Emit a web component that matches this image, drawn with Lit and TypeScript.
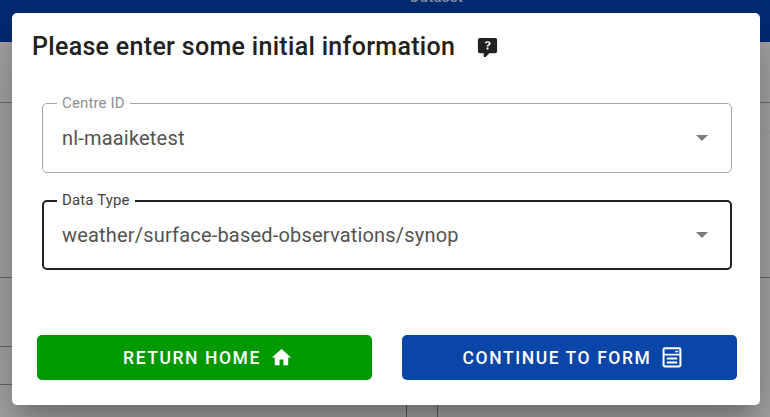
import { LitElement, html, css, svg } from "lit";
import { customElement, property } from "lit/decorators.js";

const icons = {
  help: "M4,2H20A2,2 0 0,1 22,4V16A2,2 0 0,1 20,18H13.9L10.2,21.71C10,21.9 9.75,22 9.5,22V22H9A1,1 0 0,1 8,21V18H4A2,2 0 0,1 2,16V4C2,2.89 2.9,2 4,2M12.19,5.5C11.3,5.5 10.59,5.68 10.05,6.04C9.5,6.4 9.22,7 9.27,7.69H11.24C11.24,7.41 11.34,7.2 11.5,7.06C11.7,6.92 11.92,6.85 12.19,6.85C12.5,6.85 12.77,6.93 12.95,7.11C13.13,7.28 13.22,7.5 13.22,7.8C13.22,8.08 13.14,8.33 13,8.54C12.83,8.76 12.62,8.94 12.36,9.08C11.84,9.4 11.5,9.68 11.29,9.92C11.1,10.16 11,10.5 11,11H13C13,10.72 13.05,10.5 13.14,10.32C13.23,10.15 13.4,10 13.66,9.85C14.12,9.64 14.5,9.36 14.79,9C15.08,8.63 15.23,8.24 15.23,7.8C15.23,7.1 14.96,6.54 14.42,6.12C13.88,5.71 13.13,5.5 12.19,5.5M11,12V14H13V12H11Z",
  home: "M10,20V14H14V20H19V12H22L12,3L2,12H5V20H10Z",
};

const glyph = (d: string) => html`<svg viewBox="0 0 24 24">${svg`<path fill="currentColor" d=${d}></path>`}</svg>`;

const formGlyph = html`<svg viewBox="0 0 24 24">
  <rect x="3.7" y="2.4" width="17.6" height="19" rx="1.2" fill="none" stroke="currentColor" stroke-width="2.1"></rect>
  <path fill="currentColor" d="M3.5 8H21.5V10H3.5ZM15.9 5H19.1V6.6H15.9ZM7.1 12H17.9V14.2H7.1ZM7.1 16.1H17.9V18.3H7.1Z"></path>
</svg>`;

@customElement("select-field")
export class SelectField extends LitElement {
  @property() label = "";
  @property() value = "";
  static styles = css`
    :host { display: block; --line: #a6a6a6; --w: 1px; --label: #8f8f8f; }
    :host([focused]) { --line: #212121; --w: 2px; --label: #424242; }
    fieldset {
      box-sizing: border-box; height: 78px; margin: 0; padding: 0 23px 0 14px;
      border: var(--w) solid var(--line); border-radius: 5px; min-width: 0;
    }
    :host([focused]) fieldset { height: 77px; margin-top: 1px; padding: 0 22px 0 13px; }
    legend {
      height: 16px; line-height: 16px; padding: 0 5px; font-size: 15px;
      letter-spacing: 0.14px; color: var(--label);
    }
    :host([focused]) legend { line-height: 14px; }
    .row { display: flex; align-items: center; height: 54px; padding-left: 5px; justify-content: space-between; }
    :host([focused]) .row { height: 52px; }
    .value { font-size: 20px; letter-spacing: 0.19px; line-height: 30px; color: #535353; }
    .arrow { border: 6px solid transparent; border-top-color: #7b7b7b; border-bottom: 0; }
  `;
  render() {
    return html`<fieldset>
      <legend>${this.label}</legend>
      <div class="row"><span class="value">${this.value}</span><span class="arrow"></span></div>
    </fieldset>`;
  }
}

@customElement("app-root")
export class AppRoot extends LitElement {
  static styles = css`
    :host { display: block; position: relative; width: 770px; height: 417px; overflow: hidden; font-family: Roboto, "Liberation Sans", sans-serif; background: #a8a8a7; }
    .page { display: flex; flex-direction: column; height: 417px; }
    .header { height: 42px; flex: none; overflow: hidden; display: flex; justify-content: center; background: #002c76; color: #8793a6; }
    .header span { margin-top: -13px; padding-left: 103px; font-size: 15px; line-height: 20px; font-weight: 500; letter-spacing: 0.2px; }
    .bar { height: 60px; flex: none; border-bottom: 1px solid #6e6e6e; }
    .strip { height: 28px; flex: none; border-bottom: 1px solid #a1a1a1; }
    .section { height: 145px; flex: none; border-bottom: 1px solid #686868; }
    .rows { width: 406px; flex: none; }
    .rows div { border-bottom: 1px solid #686868; height: 68px; }
    .rows div + div { height: 37px; }
    .cells { display: flex; flex: 1; }
    .cells div { width: 406px; border-right: 1px solid #5c5c5c; }
    .cells div + div { width: 30px; }
    .dialog {
      position: absolute; left: 12px; top: 13px; width: 748px; height: 392px; box-sizing: border-box;
      background: #fff; border-radius: 5px; padding: 14px 28px 25px 30px; display: flex; flex-direction: column;
      box-shadow: 0 14px 19px -9px rgba(0,0,0,.2), 0 30px 48px 4px rgba(0,0,0,.14), 0 11px 58px 10px rgba(0,0,0,.12);
    }
    .title { display: flex; align-items: center; height: 40px; margin-left: -10px; gap: 21px; color: #212121; }
    h1 { margin: 0; font-size: 25px; line-height: 40px; font-weight: 500; letter-spacing: 0.31px; white-space: nowrap; }
    svg { display: block; width: 23px; height: 23px; flex: none; }
    .fields { display: flex; flex-direction: column; gap: 19px; margin-top: 28px; }
    .actions { display: flex; gap: 30px; margin: auto -5px 0; }
    button {
      flex: 1; height: 45px; border: 0; border-radius: 5px; padding: 0 0 0 7px; color: #fff; background: #009900;
      display: flex; align-items: center; justify-content: center; gap: 9px;
      font: 500 17.5px/22px Roboto, "Liberation Sans", sans-serif; letter-spacing: 1.5625px; text-transform: uppercase;
    }
    button.primary { background: #0a45a8; }
  `;
  render() {
    return html`
      <div class="page">
        <div class="header"><span>Dataset</span></div>
        <div class="bar"></div>
        <div class="strip"></div>
        <div class="section"></div>
        <div class="rows"><div></div><div></div></div>
        <div class="cells"><div></div><div></div></div>
      </div>
      <div class="dialog" role="dialog">
        <div class="title"><h1>Please enter some initial information</h1>${glyph(icons.help)}</div>
        <div class="fields">
          <select-field label="Centre ID" value="nl-maaiketest"></select-field>
          <select-field focused label="Data Type" value="weather/surface-based-observations/synop"></select-field>
        </div>
        <div class="actions">
          <button>Return home ${glyph(icons.home)}</button>
          <button class="primary">Continue to form ${formGlyph}</button>
        </div>
      </div>`;
  }
}
